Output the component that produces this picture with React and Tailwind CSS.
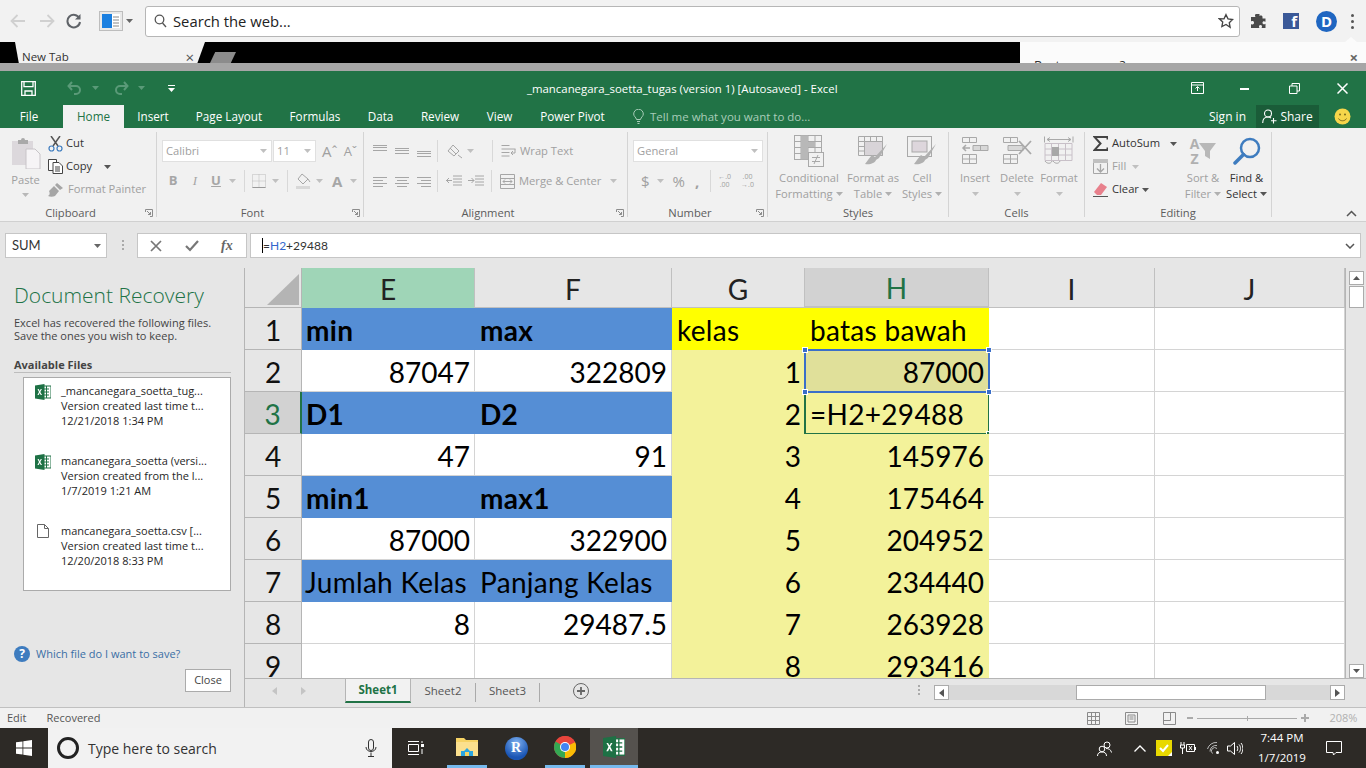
import React from "react";

const Caret = ({ c = "#a6a6a6", className = "" }) => (
  <svg width="7" height="4" viewBox="0 0 7 4" className={className}><path d="M0 0h7L3.500 4z" fill={c} /></svg>
);

const Lines = ({ rows, w = 16, h = 13, c = "#a6a6a6" }) => (
  <svg width={w} height={h} viewBox={`0 0 ${w} ${h}`} fill="none" stroke={c}>
    {rows.map(([a, b, y], i) => <path key={i} d={`M${a} ${y + 0.5}H${b}`} />)}
  </svg>
);

const XL = ({ s = 16, bg = "#1e7145", sheet = "#fff" }) => (
  <svg width={s} height={s} viewBox="0 0 16 16">
    <rect x="6" y="2" width="10" height="12" fill={sheet} stroke={bg} />
    <path d="M9 5h5M9 8h5M9 11h5M11.500 2v12" stroke={bg} />
    <path d="M0 1.500 9.500 0v16L0 14.500z" fill={bg} />
    <path d="M2.500 5 4 7.900 2.400 11h1.300l1-2 1 2H7L5.300 7.900 6.900 5H5.700l-1 1.900-1-1.900z" fill="#fff" />
  </svg>
);

function Group({ w, label, launcher, children, last }) {
  return (
    <div className={`relative h-[85px] shrink-0 ${last ? "" : "border-r border-[#d4d4d4]"} ${w}`}>
      <div className="flex h-[73px]">{children}</div>
      <div className={`h-[16px] text-center text-[11.200px] leading-[16px] text-[#5c5c5c] ${launcher ? "pr-[15px]" : ""}`}>{label}</div>
      {launcher && (
        <svg width="8" height="8" viewBox="0 0 8 8" fill="none" stroke="#8c8c8c" className="absolute right-[3px] top-[77px]">
          <path d="M.5 3V.5H7.500V7.500H5M2 2l3.500 3.500M5.500 3v2.500H3" />
        </svg>
      )}
    </div>
  );
}

const Big = ({ w, icon, l1, l2, caret, dark }) => (
  <div className={`flex flex-col items-center shrink-0 ${w}`}>
    <div className="flex h-[38px] items-center justify-center">{icon}</div>
    <div className={`h-[16px] whitespace-nowrap text-[11.200px] leading-[16px] ${dark ? "text-[#333]" : "text-[#a0a0a0]"}`}>{l1}</div>
    <div className={`flex h-[16px] items-center gap-[3px] whitespace-nowrap text-[11.200px] leading-[16px] ${dark ? "text-[#333]" : "text-[#a0a0a0]"}`}>
      {l2}{caret && <Caret c={dark ? "#555" : "#b0b0b0"} />}
    </div>
  </div>
);

const GridIcon = ({ kind }) => {
  const c = "#a9a9a9";
  if (kind === "cond") return (
    <svg width="30" height="32" viewBox="0 0 30 32" fill="none" stroke={c}>
      <rect x=".5" y=".5" width="27" height="24" /><path d="M7 .5v24M14 .5v24M21 .5v24M.5 6.500h27M.5 12.500h27M.5 18.500h27" />
      <path d="M7 .5h7v24H7zM14 7h7v5h-7z" fill="#b8b8b8" stroke="none" />
      <rect x="14.500" y="17.500" width="15" height="14" fill="#f1f1f1" /><path d="M18 22.500h8M18 26.500h8M20 29l4-9" />
    </svg>
  );
  if (kind === "table") return (
    <svg width="30" height="30" viewBox="0 0 30 30" fill="none" stroke={c}>
      <path d="M.5.500h24v19H.5zM.5 5.500h24M.5 10.500h24M.5 15h24M6.500.5v19M12.500.5v19M18.500.5v19" />
      <path d="M6.500 5.500h18v14h-18z" fill="#d8d4d8" />
      <path d="M29 8 17 21l-3-2c-2 2-4 5-7 9 5 1 10-1 11-4l3-2z" fill="#b0b0b0" stroke="none" />
    </svg>
  );
  if (kind === "cell") return (
    <svg width="30" height="30" viewBox="0 0 30 30" fill="none" stroke={c}>
      <rect x=".5" y=".5" width="24" height="20" /><rect x="5" y="5" width="15" height="11" fill="#ddd6dc" />
      <path d="M29 8 17 21l-3-2c-2 2-4 5-7 9 5 1 10-1 11-4l3-2z" fill="#b0b0b0" stroke="none" />
    </svg>
  );
  if (kind === "ins") return (
    <svg width="28" height="28" viewBox="0 0 28 28" fill="none" stroke={c}>
      <path d="M1.500.5h14v5h-14zM8.500.5v5M1.500 17.500h14v9h-14zM1.500 22h14M8.500 17.500v9" />
      <path d="M12 8.500h15v5H12zM19.500 8.500v5" fill="#d8d8d8" /><path d="M9 11H2M5 8l-3 3 3 3" strokeWidth="1.500" />
    </svg>
  );
  if (kind === "del") return (
    <svg width="30" height="28" viewBox="0 0 30 28" fill="none" stroke={c}>
      <path d="M1.500.5h14v5h-14zM8.500.5v5M1.500 17.500h14v9h-14zM1.500 22h14M8.500 17.500v9" />
      <path d="M6 8.500h15v5H6z" fill="#d8d8d8" /><path d="m17 4 12 13M29 4 17 17" strokeWidth="1.800" />
    </svg>
  );
  return (
    <svg width="30" height="30" viewBox="0 0 30 30" fill="none" stroke={c}>
      <path d="M.5.500v6M29 .5v6M3 3.500h24M3 3.500l3-2M3 3.500l3 2M27 3.500l-3-2M27 3.500l-3 2" />
      <path d="M1 7.500h27v17H1zM7.500 7.500v17M14.500 7.500v17M21.500 7.500v17M1 13h27M1 19h27" stroke="#c8c0c8" />
      <rect x="8" y="11" width="7" height="9" fill="#a8a8a8" stroke="none" />
      <path d="M1 25c2 3 6 3 7 0M9 25c2 3 6 3 7 0" />
    </svg>
  );
};

function Chrome() {
  return (
    <div className="h-[71px] shrink-0">
      <div className="relative flex h-[42px] items-center bg-[#f2f2f2]">
        <svg width="16" height="14" viewBox="0 0 16 14" fill="none" stroke="#d0d0d0" strokeWidth="1.800" className="ml-[10px]"><path d="M15 7H2M7.500 1 1.500 7l6 6" /></svg>
        <svg width="16" height="14" viewBox="0 0 16 14" fill="none" stroke="#d0d0d0" strokeWidth="1.800" className="ml-[13px]"><path d="M1 7h13M8.500 1l6 6-6 6" /></svg>
        <svg width="16" height="16" viewBox="0 0 16 16" fill="none" stroke="#5f6368" strokeWidth="2" className="ml-[11px]"><path d="M13.500 5.500A6.300 6.300 0 1 0 14 9" /><path d="M14.500 1v5.500H9" fill="#5f6368" stroke="none" /></svg>
        <svg width="24" height="20" viewBox="0 0 24 20" className="ml-[17px]"><rect x=".5" y=".5" width="23" height="19" fill="#e9e9e9" stroke="#bdbdbd" /><rect x="3" y="3" width="10" height="14" fill="#1a7fe0" /><rect x="13" y="3" width="8" height="14" fill="#fff" /><path d="M14 6h6M14 9h6M14 12h6M14 15h6" stroke="#888" /></svg>
        <Caret c="#666" className="ml-[3px]" />
        <div className="ml-[12px] flex h-[31px] w-[1095px] items-center rounded-[3px] border border-[#b6b6b6] bg-white pl-[8px] pr-[5px]">
          <svg width="13" height="14" viewBox="0 0 13 14" fill="none" stroke="#555" strokeWidth="1.300"><circle cx="5.500" cy="5.500" r="4.300" /><path d="m8.500 9 3.500 4" /></svg>
          <span className="ml-[6px] text-[14.800px] text-[#222]">Search the web...</span>
          <svg width="16" height="16" viewBox="0 0 24 24" fill="none" stroke="#444" strokeWidth="2" className="ml-auto"><path d="m12 2.500 3 6.300 6.900.9-5 4.800 1.300 6.900L12 17.200l-6.200 3.200 1.300-6.900-5-4.800L9 8.800z" /></svg>
        </div>
        <svg width="16" height="16" viewBox="0 0 16 16" className="ml-[10px]" fill="#4a4a4a"><path d="M6 1h3.500v2.300c0-1 3-1 3 .7v1.500h3v3.300c-1.500-1-3-.5-3 1s1.500 2 3 1V15h-4c1-1.500.5-3-1-3s-2 1.500-1 3H1v-4c1.500 1 3 .5 3-1.200S2.500 7.500 1 8.500V4h4.500C4.500 3 5 1 6 1z" /></svg>
        <div className="ml-[17px] flex h-[16px] w-[16px] items-end justify-end bg-[#3b5998] pr-[2px] text-[15px] font-bold leading-[15px] text-white">f</div>
        <div className="ml-[17px] flex h-[21px] w-[21px] items-center justify-center rounded-full bg-[#1f66c1] text-[15px] font-bold leading-none text-white">D</div>
        <div className="ml-[14px] flex flex-col gap-[3px]">
          <span className="h-[3px] w-[3px] rounded-full bg-[#555]" /><span className="h-[3px] w-[3px] rounded-full bg-[#555]" /><span className="h-[3px] w-[3px] rounded-full bg-[#555]" />
        </div>
        <span className="absolute bottom-0 left-[1345px] h-[5px] w-[12px] bg-[#fbfbfb] [clip-path:polygon(50%_0,100%_100%,0_100%)]" />
      </div>
      <div className="flex h-[21px] overflow-hidden bg-black">
        <div className="ml-[15px] flex h-[21px] w-[190px] items-start bg-[#f2f2f2] pl-[7px] pr-[11px] pt-[7px] [clip-path:polygon(0_0,100%_0,96%_100%,2%_100%)]">
          <span className="text-[11.500px] leading-[16px] text-[#333]">New Tab</span>
          <span className="ml-auto text-[15px] leading-[16px] text-[#555]">×</span>
        </div>
        <div className="ml-[5px] mt-[10px] h-[11px] w-[26px] bg-[#8c8c8c] [clip-path:polygon(20%_0,100%_0,80%_100%,0_100%)]" />
        <div className="relative ml-auto h-[21px] w-[346px] overflow-hidden bg-[#fbfbfb] pl-[14px] pt-[15px] text-[13px] leading-[16px] text-[#333]">
          Restore pages?
          <span className="absolute right-[8px] top-[7px] text-[15px] font-bold leading-[16px] text-[#666]">×</span>
        </div>
      </div>
      <div className="h-[8px] bg-[#a6a6a6]" />
    </div>
  );
}

const Tab = ({ w, t, active }) => (
  <div className={`flex h-[23px] shrink-0 items-center justify-center text-[11.700px] ${w} ${active ? "bg-[#f1f1f1] text-[#217346]" : "text-white"}`}>{t}</div>
);

function TitleBar() {
  return (
    <div className="h-[57px] shrink-0 bg-[#217346] text-white">
      <div className="relative flex h-[34px] items-center">
        <svg width="15" height="15" viewBox="0 0 15 15" fill="none" stroke="#fff" strokeWidth="1.300" className="ml-[21px]"><path d="M.7.7h13.600v13.600H.7zM3 .7v5h9v-5M4 14.300V10h7v4.300" /></svg>
        <svg width="16" height="14" viewBox="0 0 16 14" fill="none" stroke="#5a9a78" strokeWidth="2" className="ml-[31px]"><path d="M5 1 1.500 5 5 9M2 5h7a4 4 0 0 1 0 8H7" /></svg>
        <Caret c="#5a9a78" className="ml-[9px]" />
        <svg width="16" height="14" viewBox="0 0 16 14" fill="none" stroke="#5a9a78" strokeWidth="2" className="ml-[14px]"><path d="M11 1l3.500 4L11 9M14 5H7a4 4 0 0 0 0 8h2" /></svg>
        <Caret c="#5a9a78" className="ml-[9px]" />
        <svg width="7" height="7" viewBox="0 0 7 7" fill="#fff" className="ml-[23px]"><path d="M0 0h7v1H0zM0 3h7L3.500 7z" /></svg>
        <span className="ml-[352px] translate-y-[1px] whitespace-nowrap text-[11.400px]">_mancanegara_soetta_tugas (version 1) [Autosaved] - Excel</span>
        <svg width="13" height="12" viewBox="0 0 13 12" fill="none" stroke="#fff" className="ml-[353px]"><path d="M.5.500h12v11H.5zM.5 3h12M6.500 9V5M4.500 6.500l2-2 2 2" /></svg>
        <span className="ml-[36px] h-[2px] w-[9px] translate-y-[1px] bg-white" />
        <svg width="11" height="11" viewBox="0 0 11 11" fill="none" stroke="#fff" className="ml-[40px]"><path d="M.5 3h7.500v7.500H.5zM3 3V.5h7.500V8H8" /></svg>
        <svg width="11" height="11" viewBox="0 0 11 11" fill="none" stroke="#fff" strokeWidth="1.500" className="ml-[37px]"><path d="m.5.500 10 10M10.500.5l-10 10" /></svg>
      </div>
      <div className="flex h-[23px] items-center">
        <Tab w="w-[58px]" t="File" /><div className="w-[5px]" />
        <Tab w="w-[61px]" t="Home" active />
        <Tab w="w-[58px]" t="Insert" /><Tab w="w-[94px]" t="Page Layout" /><Tab w="w-[78px]" t="Formulas" />
        <Tab w="w-[53px]" t="Data" /><Tab w="w-[66px]" t="Review" /><Tab w="w-[53px]" t="View" /><Tab w="w-[93px]" t="Power Pivot" />
        <svg width="11" height="15" viewBox="0 0 11 15" fill="none" stroke="#a9cdb9" className="ml-[14px]"><path d="M3.500 10.500C3 8 .7 7.500.7 5a4.800 4.800 0 0 1 9.600 0c0 2.500-2.300 3-2.800 5.500zM4 12.500h3M4.500 14.500h2" /></svg>
        <span className="ml-[6px] whitespace-nowrap text-[11.500px] text-[#a9cdb9]">Tell me what you want to do...</span>
        <span className="ml-auto text-[12px]">Sign in</span>
        <div className="ml-[10px] flex h-[23px] w-[63px] items-center justify-center gap-[3px] bg-[#1a5c38] text-[12px]">
          <svg width="15" height="15" viewBox="0 0 15 15" fill="none" stroke="#fff" strokeWidth="1.100"><circle cx="6" cy="4.500" r="3.500" /><path d="M.7 14c0-4 2.500-6 5.300-6 1 0 2 .3 3 1M11.500 9v5.500M9 11.700h5.500" /></svg>
          Share
        </div>
        <svg width="17" height="17" viewBox="0 0 17 17" className="ml-[15px] mr-[15px]"><circle cx="8.500" cy="8.500" r="8" fill="#f6d64a" /><circle cx="6" cy="6.500" r="1" fill="#7a6a1e" /><circle cx="11" cy="6.500" r="1" fill="#7a6a1e" /><path d="M4.500 10.500c1.500 3 6.500 3 8 0" fill="none" stroke="#7a6a1e" /></svg>
      </div>
    </div>
  );
}

const Combo = ({ w, t }) => (
  <div className={`flex h-[22px] shrink-0 items-center justify-between border border-[#e0e0e0] bg-white pl-[3px] pr-[4px] text-[11.200px] text-[#a0a0a0] ${w}`}>
    {t}<Caret c="#c0c0c0" />
  </div>
);

const Sep = ({ h = "h-[22px]", ml = "ml-0" }) => <div className={`w-px shrink-0 bg-[#d8d8d8] ${h} ${ml}`} />;

function Ribbon() {
  const G = "#a6a6a6";
  return (
    <div className="flex h-[94px] shrink-0 border-b border-[#d0d0d0] bg-[#f1f1f1] pt-[4px] text-[11.200px]">
      <Group w="w-[157px]" label="Clipboard" launcher>
        <div className="flex w-[48px] shrink-0 flex-col items-center">
          <svg width="29" height="32" viewBox="0 0 29 32" className="ml-[4px] mt-[5px]"><path d="M0 4h21v24H0z" fill="#dcd8dc" /><path d="M6 3h3a2 2 0 0 1 4 0h3v4H6z" fill="#a9a9a9" /><path d="M14 12h9l5 5v15H14z" fill="#f6f4f6" stroke="#c8c4c8" /></svg>
          <span className="ml-[3px] mt-[3px] leading-[16px] text-[#a0a0a0]">Paste</span>
          <Caret c="#b8b8b8" className="ml-[3px] mt-[5px]" />
        </div>
        <div className="flex flex-col">
          <div className="flex h-[23px] items-center gap-[3px] text-[#333]">
            <svg width="15" height="16" viewBox="0 0 15 16" fill="none"><path d="m3 0 7 10M12 0 5 10" stroke="#555" strokeWidth="1.500" /><circle cx="3.500" cy="12.500" r="2.500" stroke="#3e7cbf" strokeWidth="1.200" /><circle cx="11.500" cy="12.500" r="2.500" stroke="#3e7cbf" strokeWidth="1.200" /></svg>
            Cut
          </div>
          <div className="flex h-[23px] items-center gap-[3px] text-[#333]">
            <svg width="15" height="15" viewBox="0 0 15 15" fill="none" stroke="#444"><path d="M.5.500h8v11H.5z" fill="#fff" /><path d="M5 3.500h6l3.500 3.500v7.500H5z" fill="#fff" /><path d="M7 8h5M7 10h5M7 12h5" /></svg>
            Copy<Caret c="#555" className="ml-[9px]" />
          </div>
          <div className="flex h-[23px] items-center gap-[5px] whitespace-nowrap text-[#a0a0a0]">
            <svg width="15" height="14" viewBox="0 0 15 14" fill={G}><path d="M9 0l6 5-3 2-5-5zM6 3l5 5-4 5c-2 1-5 1-7 0 2-1 2-3 1-5z" /></svg>
            Format Painter
          </div>
        </div>
      </Group>
      <Group w="w-[207px]" label="Font" launcher>
        <div className="flex flex-col pl-[5px]">
          <div className="mt-[8px] flex items-center">
            <Combo w="w-[110px]" t="Calibri" />
            <div className="w-px" />
            <Combo w="w-[43px]" t="11" />
            <span className="ml-[6px] text-[15px] leading-none text-[#a0a0a0]">Aˆ</span>
            <span className="ml-[6px] text-[13px] leading-none text-[#a0a0a0]">Aˇ</span>
          </div>
          <div className="mt-[8px] flex h-[22px] items-center text-[#a6a6a6]">
            <span className="w-[22px] text-center text-[13px] font-bold">B</span>
            <span className="w-[22px] text-center font-['Liberation_Serif',serif] text-[13px] italic">I</span>
            <span className="w-[20px] text-center text-[13px] font-bold underline">U</span>
            <Caret c="#c0c0c0" className="ml-[3px]" />
            <Sep ml="ml-[8px]" />
            <svg width="14" height="14" viewBox="0 0 14 14" fill="none" stroke="#bbb" strokeDasharray="1 1" className="ml-[7px]"><path d="M.5.500h13v13H.5zM7 .5v13M.5 7h13" /><path d="M.5 13.500h13" stroke="#999" strokeDasharray="none" /></svg>
            <Caret c="#c0c0c0" className="ml-[6px]" />
            <Sep ml="ml-[8px]" />
            <svg width="17" height="16" viewBox="0 0 17 16" fill="none" stroke={G} className="ml-[7px]"><path d="m7 1 6 5-5 5-5-5zM13 6l2 3" /><rect x="1" y="13" width="14" height="3" fill="#d8d8d8" stroke="none" /></svg>
            <Caret c="#c0c0c0" className="ml-[4px]" />
            <span className="ml-[9px] text-[15px] font-bold leading-none">A</span>
            <Caret c="#c0c0c0" className="ml-[8px]" />
          </div>
        </div>
      </Group>
      <Group w="w-[264px]" label="Alignment" launcher>
        <div className="flex flex-col pl-[8px]">
          <div className="mt-[8px] flex h-[22px] items-center">
            <Lines rows={[[1, 15, 0], [1, 15, 2], [1, 15, 5]]} h={13} />
            <div className="w-[6px]" />
            <Lines rows={[[1, 15, 3], [1, 15, 5], [1, 15, 8]]} />
            <div className="w-[6px]" />
            <Lines rows={[[1, 15, 6], [1, 15, 8], [1, 15, 11]]} />
            <Sep ml="ml-[5px]" />
            <svg width="18" height="16" viewBox="0 0 18 16" fill="none" stroke={G} className="ml-[8px]"><path d="m2 8 5-6 6 6-5 5zM12 12l4 3" /><path d="M4 5l6 6" /></svg>
            <Caret c="#c0c0c0" className="ml-[3px]" />
            <Sep ml="ml-[18px]" />
            <svg width="15" height="15" viewBox="0 0 15 15" fill="none" stroke={G} className="ml-[8px]"><path d="M.5 1.500h8M.5 5h14M.5 8.500h8M.5 12h8M14 5v4h-4m2-2-2 2 2 2" /></svg>
            <span className="ml-[4px] text-[#a0a0a0]">Wrap Text</span>
          </div>
          <div className="mt-[8px] flex h-[22px] items-center">
            <Lines rows={[[1, 15, 2], [1, 11, 5], [1, 15, 8], [1, 11, 11]]} />
            <div className="w-[6px]" />
            <Lines rows={[[1, 15, 2], [3, 13, 5], [1, 15, 8], [3, 13, 11]]} />
            <div className="w-[6px]" />
            <Lines rows={[[1, 15, 2], [5, 15, 5], [1, 15, 8], [5, 15, 11]]} />
            <Sep ml="ml-[5px]" />
            <svg width="16" height="13" viewBox="0 0 16 13" fill="none" stroke={G} className="ml-[8px]"><path d="M7 1h9M7 4h9M7 7h9M7 10h9M6 5.500H0M3 3 .5 5.500 3 8" /></svg>
            <svg width="16" height="13" viewBox="0 0 16 13" fill="none" stroke={G} className="ml-[6px]"><path d="M7 1h9M7 4h9M7 7h9M7 10h9M0 5.500h6M3.500 3 6 5.500 3.500 8" /></svg>
            <Sep ml="ml-[7px]" />
            <svg width="15" height="15" viewBox="0 0 15 15" fill="none" stroke={G} className="ml-[8px]"><path d="M.5.500h14v14H.5zM.5 4.500h14M.5 10.500h14M3 7.500h9M5 5.500l-2 2 2 2M10 5.500l2 2-2 2" /></svg>
            <span className="ml-[4px] whitespace-nowrap text-[#a0a0a0]">Merge &amp; Center</span>
            <Caret c="#c0c0c0" className="ml-[9px]" />
          </div>
        </div>
      </Group>
      <Group w="w-[140px]" label="Number" launcher>
        <div className="flex flex-col pl-[5px]">
          <div className="mt-[8px]"><Combo w="w-[130px]" t="General" /></div>
          <div className="mt-[8px] flex h-[22px] items-center pl-[8px] text-[#a0a0a0]">
            <span className="text-[15px]">$</span>
            <Caret c="#c0c0c0" className="ml-[7px]" />
            <span className="ml-[9px] text-[15px]">%</span>
            <span className="ml-[10px] text-[15px] font-bold">,</span>
            <Sep ml="ml-[11px]" />
            <span className="ml-[7px] text-center text-[7px] leading-[8px]">←.0<br />.00</span>
            <span className="ml-[10px] text-center text-[7px] leading-[8px]">.00<br />→.0</span>
          </div>
        </div>
      </Group>
      <Group w="w-[181px]" label="Styles">
        <Big w="w-[82px]" icon={<GridIcon kind="cond" />} l1="Conditional" l2="Formatting" caret />
        <Big w="w-[46px]" icon={<GridIcon kind="table" />} l1="Format as" l2="Table" caret />
        <Big w="w-[52px]" icon={<GridIcon kind="cell" />} l1="Cell" l2="Styles" caret />
      </Group>
      <Group w="w-[136px]" label="Cells">
        <div className="w-[5px]" />
        <Big w="w-[42px]" icon={<GridIcon kind="ins" />} l1="Insert" l2={<Caret c="#c0c0c0" />} />
        <Big w="w-[42px]" icon={<GridIcon kind="del" />} l1="Delete" l2={<Caret c="#c0c0c0" />} />
        <Big w="w-[42px]" icon={<GridIcon kind="fmt" />} l1="Format" l2={<Caret c="#c0c0c0" />} />
      </Group>
      <Group w="w-[187px]" label="Editing">
        <div className="flex w-[95px] shrink-0 flex-col pl-[8px]">
          <div className="flex h-[23px] items-center gap-[4px] text-[#333]">
            <svg width="15" height="15" viewBox="0 0 15 15" fill="none" stroke="#444" strokeWidth="2"><path d="M14.500 3.500V1H1.500l6 6.500-6 6.500h13v-2.500" /></svg>
            AutoSum<Caret c="#555" className="ml-[6px]" />
          </div>
          <div className="flex h-[23px] items-center gap-[4px] text-[#a0a0a0]">
            <svg width="15" height="15" viewBox="0 0 15 15" fill="none" stroke={G}><path d="M.5.500h14v14H.5z" /><path d="M0 0h15v4H0z" fill="#c0c0c0" stroke="none" /><path d="M7.500 5v8M4 9.500l3.500 3.500L11 9.500" strokeWidth="1.300" /></svg>
            Fill<Caret c="#c0c0c0" className="ml-[2px]" />
          </div>
          <div className="flex h-[23px] items-center gap-[4px] text-[#333]">
            <svg width="15" height="14" viewBox="0 0 15 14"><path d="M8 0l6 4-6 8H4L1 9z" fill="#e8808c" /><path d="M0 13.500h15" stroke="#555" /></svg>
            Clear<Caret c="#555" className="ml-[-1px]" />
          </div>
        </div>
        <Big w="w-[46px]" icon={<span className="flex items-center"><span className="text-center text-[14px] font-bold leading-[15px] text-[#b0b0b0]">A<br />Z</span><svg width="17" height="18" viewBox="0 0 17 18" fill="#b8b8b8"><path d="M0 1h17l-6 8v8l-5-3V9z" /></svg></span>} l1="Sort &" l2="Filter" caret />
        <Big w="w-[41px]" dark icon={<svg width="28" height="28" viewBox="0 0 28 28" fill="none" stroke="#3e7cbf"><circle cx="17" cy="11" r="9" strokeWidth="2.500" /><path d="M10.500 17.500 2 26" strokeWidth="3.500" strokeLinecap="round" /></svg>} l1="Find &" l2="Select" caret />
      </Group>
      <svg width="11" height="7" viewBox="0 0 11 7" fill="none" stroke="#555" strokeWidth="1.500" className="ml-[74px] mt-[78px]"><path d="m1 6 4.500-4.500L10 6" /></svg>
    </div>
  );
}

function FormulaBar() {
  return (
    <div className="flex h-[46px] shrink-0 items-start bg-[#e6e6e6] pl-[5px] pr-[5px] pt-[11px] font-['Lato',sans-serif]">
      <div className="flex h-[25px] w-[102px] shrink-0 items-center justify-between border border-[#c6c6c6] bg-white pl-[6px] pr-[5px] text-[13px] text-[#333]">
        SUM<Caret c="#666" />
      </div>
      <div className="ml-[15px] mt-[7px] flex flex-col gap-[2px]"><span className="h-[2px] w-[2px] bg-[#aaa]" /><span className="h-[2px] w-[2px] bg-[#aaa]" /><span className="h-[2px] w-[2px] bg-[#aaa]" /></div>
      <div className="ml-[13px] flex h-[25px] w-[110px] shrink-0 items-center border border-[#c6c6c6] bg-white pl-[12px]">
        <svg width="12" height="12" viewBox="0 0 12 12" fill="none" stroke="#777" strokeWidth="1.700"><path d="m1 1 10 10M11 1 1 11" /></svg>
        <svg width="14" height="12" viewBox="0 0 14 12" fill="none" stroke="#777" strokeWidth="2.200" className="ml-[23px]"><path d="m1 6 4 4 8-9" /></svg>
        <span className="ml-[22px] font-['Liberation_Serif',serif] text-[14px] font-bold italic leading-none text-[#666]">fx</span>
      </div>
      <div className="ml-[3px] flex h-[25px] flex-1 items-center border border-[#c6c6c6] bg-white pl-[11px] pr-[5px] text-[12px] text-[#333]">
        <span className="h-[15px] w-px bg-black" /><span>=</span><span className="text-[#3366cc]">H2</span><span>+29488</span>
        <svg width="10" height="6" viewBox="0 0 10 6" fill="none" stroke="#555" strokeWidth="1.500" className="ml-auto"><path d="m1 1 4 4 4-4" /></svg>
      </div>
    </div>
  );
}

const FileItem = ({ icon, a, b, c, mt = "" }) => (
  <div className={`flex h-[45px] ${mt}`}>
    <div className="w-[37px] shrink-0 pl-[11px] pt-[1px]">{icon}</div>
    <div className="whitespace-nowrap text-[11px] leading-[15px] text-[#262626]">{a}<br />{b}<br />{c}</div>
  </div>
);

function Recovery() {
  return (
    <div className="flex h-full w-[245px] shrink-0 flex-col border-r border-[#b5b5b5] bg-[#e6e6e6] pl-[14px] pr-[13px]">
      <div className="mt-[14px] whitespace-nowrap text-[21px] font-light leading-[26px] text-[#217346]">Document Recovery</div>
      <div className="mt-[8px] whitespace-nowrap text-[11px] leading-[13px] text-[#444]">Excel has recovered the following files.<br />Save the ones you wish to keep.</div>
      <div className="mt-[16px] h-[15px] border-b border-[#bdbdbd] text-[11px] font-bold leading-[14px] text-[#444]">Available Files</div>
      <div className="ml-[9px] mt-[4px] h-[214px] border border-[#ababab] bg-white pt-[5px]">
        <FileItem icon={<XL />} a="_mancanegara_soetta_tug..." b="Version created last time t..." c="12/21/2018 1:34 PM" />
        <FileItem mt="mt-[25px]" icon={<XL />} a="mancanegara_soetta (versi..." b="Version created from the l..." c="1/7/2019 1:21 AM" />
        <FileItem mt="mt-[25px]" icon={<svg width="12" height="14" viewBox="0 0 12 14" fill="#fff" stroke="#666" className="ml-[2px]"><path d="M.5.500h7l4 4v9H.5zM7.500.5v4h4" /></svg>} a="mancanegara_soetta.csv  [..." b="Version created last time t..." c="12/20/2018 8:33 PM" />
      </div>
      <div className="mt-[55px] flex h-[16px] items-center whitespace-nowrap text-[11px] text-[#3a6ea5]">
        <span className="mr-[6px] flex h-[16px] w-[16px] items-center justify-center rounded-full bg-[#3e7cbf] text-[12px] font-bold leading-none text-white">?</span>
        Which file do I want to save?
      </div>
      <div className="ml-auto mt-[7px] flex h-[23px] w-[46px] items-center justify-center border border-[#ababab] bg-white text-[11px] text-[#444]">Close</div>
    </div>
  );
}

const BLUE = "bg-[#558ed5]";
const YEL = "bg-[#ffff00]";
const PALE = "bg-[#f3f29a]";
const WHITE = "bg-white border-r border-b border-[#d4d4d4]";

const Cell = ({ t = "", bg = WHITE, bold, right, sel, pad = "pl-[5px] pr-[4px]", cls = "" }) => (
  <div className={`relative flex h-[42px] items-center overflow-visible whitespace-nowrap pt-[2px] ${pad} ${bg} ${bold ? "font-bold" : ""} ${right ? "justify-end" : "tracking-[0.3px]"} ${cls}`}>
    {t}
    {sel === "blue" && (
      <div className="absolute inset-[-1px] z-10 border-2 border-[#3a6fc9]">
        <span className="absolute left-[-4px] top-[-4px] h-[6px] w-[6px] border border-white bg-[#3a6fc9]" />
        <span className="absolute right-[-4px] top-[-4px] h-[6px] w-[6px] border border-white bg-[#3a6fc9]" />
        <span className="absolute bottom-[-4px] left-[-4px] h-[6px] w-[6px] border border-white bg-[#3a6fc9]" />
        <span className="absolute bottom-[-4px] right-[-4px] h-[6px] w-[6px] border border-white bg-[#3a6fc9]" />
      </div>
    )}
    {sel === "green" && (
      <div className="absolute inset-[-1px] border-2 border-[#217346]">
        <span className="absolute bottom-[-4px] right-[-4px] h-[6px] w-[6px] border border-white bg-[#217346]" />
      </div>
    )}
  </div>
);

const RowH = ({ n, sel }) => (
  <div className={`flex h-[42px] items-center justify-center border-b border-r border-[#b5b5b5] pt-[2px] ${sel ? "border-r-2 border-r-[#217346] bg-[#d2d2d2] text-[#217346]" : "bg-[#e6e6e6] text-[#111]"}`}>{n}</div>
);

const ColH = ({ t, cls = "bg-[#e6e6e6] text-[#222] border-b border-[#b5b5b5]" }) => (
  <div className={`flex h-[40px] items-center justify-center border-r border-[#c0c0c0] pt-[2px] ${cls}`}>{t}</div>
);

function Sheet() {
  const H5 = "pl-[5px] pr-[5px]";
  const E4 = "pl-[4px] pr-[4px]";
  const data = [
    [{ t: "min", bg: BLUE, bold: 1, pad: E4 }, { t: "max", bg: BLUE, bold: 1 }, { t: "kelas", bg: YEL }, { t: "batas bawah", bg: YEL, pad: H5 }],
    [{ t: "87047", right: 1, pad: E4 }, { t: "322809", right: 1 }, { t: "1", right: 1, bg: PALE }, { t: "87000", right: 1, bg: "bg-[#e0e09a]", sel: "blue", pad: H5 }],
    [{ t: "D1", bg: BLUE, bold: 1, pad: E4 }, { t: "D2", bg: BLUE, bold: 1 }, { t: "2", right: 1, bg: PALE }, { t: "=H2+29488", bg: PALE, sel: "green", pad: H5, cls: "tracking-[-0.6px]" }],
    [{ t: "47", right: 1, pad: E4 }, { t: "91", right: 1 }, { t: "3", right: 1, bg: PALE }, { t: "145976", right: 1, bg: PALE, pad: H5 }],
    [{ t: "min1", bg: BLUE, bold: 1, pad: E4 }, { t: "max1", bg: BLUE, bold: 1 }, { t: "4", right: 1, bg: PALE }, { t: "175464", right: 1, bg: PALE, pad: H5 }],
    [{ t: "87000", right: 1, pad: E4 }, { t: "322900", right: 1 }, { t: "5", right: 1, bg: PALE }, { t: "204952", right: 1, bg: PALE, pad: H5 }],
    [{ t: "Jumlah Kelas", bg: BLUE, pad: "pl-[3px] pr-[4px]" }, { t: "Panjang Kelas", bg: BLUE }, { t: "6", right: 1, bg: PALE }, { t: "234440", right: 1, bg: PALE, pad: H5 }],
    [{ t: "8", right: 1, pad: E4 }, { t: "29487.5", right: 1 }, { t: "7", right: 1, bg: PALE }, { t: "263928", right: 1, bg: PALE, pad: H5 }],
    [{}, {}, { t: "8", right: 1, bg: PALE }, { t: "293416", right: 1, bg: PALE, pad: H5 }],
  ];
  return (
    <div className="flex h-[410px] shrink-0">
      <div className="grid h-[410px] w-[1100px] shrink-0 grid-cols-[57px_173px_197px_133px_184px_166px_190px] content-start overflow-hidden bg-[#e6e6e6] font-['Lato',sans-serif] text-[28px] text-black">
        <div className="flex h-[40px] items-end justify-end border-b border-r border-[#b5b5b5] bg-[#e6e6e6] p-[2px]">
          <div className="h-[31px] w-[32px] bg-[#b4b4b4] [clip-path:polygon(100%_0,100%_100%,0_100%)]" />
        </div>
        <ColH t="E" cls="bg-[#9fd5b7] text-[#222]" />
        <ColH t="F" />
        <ColH t="G" />
        <ColH t="H" cls="bg-[#d2d2d2] text-[#217346] border-b-2 border-[#217346]" />
        <ColH t="I" />
        <ColH t="J" />
        {data.map((r, i) => (
          <React.Fragment key={i}>
            <RowH n={i + 1} sel={i === 2} />
            {r.map((c, j) => <Cell key={j} {...c} />)}
            <Cell /><Cell />
          </React.Fragment>
        ))}
      </div>
      <div className="flex h-[410px] w-[21px] shrink-0 flex-col items-center border-l border-[#b5b5b5] bg-[#e6e6e6] pt-[3px]">
        <div className="flex h-[14px] w-[15px] items-center justify-center border border-[#ababab] bg-white"><Caret c="#555" className="rotate-180" /></div>
        <div className="mt-[1px] h-[22px] w-[15px] border border-[#ababab] bg-white" />
        <div className="mt-auto flex h-[14px] w-[15px] items-center justify-center border border-[#ababab] bg-white"><Caret c="#555" /></div>
      </div>
    </div>
  );
}

const SmallArrow = ({ d, c = "#555" }) => (
  <div className="flex h-[15px] w-[15px] shrink-0 items-center justify-center border border-[#ababab] bg-white">
    <svg width="5" height="8" viewBox="0 0 5 8" fill={c}><path d={d === "l" ? "M5 0v8L0 4z" : "M0 0v8l5-4z"} /></svg>
  </div>
);

function SheetTabs() {
  return (
    <div className="flex h-[29px] shrink-0 items-start border-t border-[#b5b5b5] bg-[#e6e6e6] font-['Open_Sans',sans-serif]">
      <svg width="5" height="8" viewBox="0 0 5 8" fill="#c4c4c4" className="ml-[27px] mt-[8px]"><path d="M5 0v8L0 4z" /></svg>
      <svg width="5" height="8" viewBox="0 0 5 8" fill="#c4c4c4" className="ml-[24px] mt-[8px]"><path d="M0 0v8l5-4z" /></svg>
      <div className="ml-[39px] flex h-[24px] w-[66px] items-center justify-center border-x border-b-2 border-x-[#b5b5b5] border-b-[#217346] bg-[#f2f2f2] text-[11.500px] font-bold text-[#217346]">Sheet1</div>
      <div className="flex h-[24px] w-[64px] items-center justify-center text-[11.500px] text-[#555]">Sheet2</div>
      <div className="mt-[4px] h-[19px] w-px bg-[#aaa]" />
      <div className="flex h-[24px] w-[63px] items-center justify-center text-[11.500px] text-[#555]">Sheet3</div>
      <div className="mt-[4px] h-[19px] w-px bg-[#aaa]" />
      <svg width="16" height="16" viewBox="0 0 16 16" fill="none" stroke="#666" className="ml-[33px] mt-[4px]"><circle cx="8" cy="8" r="7.500" /><path d="M8 4v8M4 8h8" strokeWidth="1.800" /></svg>
      <div className="ml-[329px] mt-[6px] flex flex-col gap-[2px]"><span className="h-[2px] w-[2px] bg-[#aaa]" /><span className="h-[2px] w-[2px] bg-[#aaa]" /><span className="h-[2px] w-[2px] bg-[#aaa]" /></div>
      <div className="ml-[14px] mt-[6px] flex h-[15px] w-[411px] shrink-0 bg-[#d8d8d8]">
        <SmallArrow d="l" />
        <div className="ml-[127px] h-[15px] w-[190px] border border-[#ababab] bg-white" />
        <div className="ml-auto"><SmallArrow d="r" /></div>
      </div>
    </div>
  );
}

function StatusBar() {
  const c = "#8a8a8a";
  return (
    <div className="flex h-[21px] shrink-0 items-center border-t border-[#c0c0c0] bg-[#f1f1f1] pl-[7px] text-[11px] text-[#555]">
      <span>Edit</span><span className="ml-[20px]">Recovered</span>
      <svg width="13" height="13" viewBox="0 0 13 13" fill="none" stroke={c} className="ml-[987px]"><path d="M.5.500h12v12H.5zM4.500.5v12M8.500.5v12M.5 4.500h12M.5 8.500h12" /></svg>
      <svg width="13" height="13" viewBox="0 0 13 13" fill="none" stroke={c} className="ml-[25px]"><path d="M.5.500h12v12H.5zM3 3h7v7H3zM4.500 5h4M4.500 7h4" /></svg>
      <svg width="13" height="13" viewBox="0 0 13 13" fill="none" stroke={c} className="ml-[25px]"><path d="M.5.500h12v12H.5zM.5 8.500h7v-8" /></svg>
      <span className="ml-[11px] h-[2px] w-[6px] bg-[#aaa]" />
      <div className="relative ml-[4px] h-px w-[100px] bg-[#aaa]"><span className="absolute left-1/2 top-[-2px] h-[5px] w-px bg-[#aaa]" /></div>
      <svg width="8" height="8" viewBox="0 0 8 8" stroke="#aaa" strokeWidth="2" className="ml-[4px]"><path d="M4 0v8M0 4h8" /></svg>
      <span className="ml-[20px] text-[#b0b0b0]">208%</span>
    </div>
  );
}

function Taskbar() {
  return (
    <div className="flex h-[40px] shrink-0 items-center bg-[#2d2a26] text-white">
      <div className="flex h-[40px] w-[48px] items-center justify-center">
        <svg width="16" height="16" viewBox="0 0 16 16" fill="#fff"><path d="M0 2.300 6.500 1.400v6.200H0zM7.300 1.300 16 0v7.600H7.300zM0 8.400h6.500v6.200L0 13.700zM7.300 8.400H16V16l-8.700-1.200z" /></svg>
      </div>
      <div className="flex h-[40px] w-[344px] items-center bg-[#f2f2f2] pl-[9px] pr-[15px]">
        <span className="h-[22px] w-[22px] rounded-full border-[3px] border-[#222]" />
        <span className="ml-[9px] text-[14px] text-[#333]">Type here to search</span>
        <svg width="12" height="18" viewBox="0 0 12 18" fill="none" stroke="#333" className="ml-auto"><rect x="3.500" y=".5" width="5" height="11" rx="2.500" /><path d="M1 8c0 6 10 6 10 0M6 13.500V17M3 17.500h6" /></svg>
      </div>
      <svg width="16" height="14" viewBox="0 0 16 14" fill="none" stroke="#fff" className="ml-[16px]"><path d="M0 .5h11M0 13.500h11M.5 3.500h10v7H.5z" /><rect x="13" y="3" width="3" height="3" fill="#fff" stroke="none" /><path d="M14 0v2M14 8v5" /></svg>
      <div className="relative ml-[23px] flex h-[40px] w-[40px] items-center justify-center border-b-[3px] border-[#76b9ed]">
        <svg width="22" height="18" viewBox="0 0 22 18"><path d="M0 0h8l2 2h12v16H0z" fill="#f6d365" /><path d="M0 4h22v14H0z" fill="#fbe08e" /><path d="M5 18v-5h3l3-3 3 3h3v5z" fill="#2ba5e0" /><path d="M9 18v-4h4v4z" fill="#f6d365" /></svg>
      </div>
      <div className="ml-[9px] flex h-[40px] w-[40px] items-center justify-center">
        <div className="flex h-[23px] w-[23px] items-center justify-center rounded-full bg-[radial-gradient(circle_at_50%_25%,#7fb2f0,#1a55b4_70%)] font-['Liberation_Serif',serif] text-[14px] font-bold leading-none text-white">R</div>
      </div>
      <div className="ml-[9px] flex h-[40px] w-[40px] items-center justify-center border-b-[3px] border-[#76b9ed]">
        <svg width="22" height="22" viewBox="0 0 22 22"><circle cx="11" cy="11" r="11" fill="#e8453c" /><path d="M11 11 1.500 5.500A11 11 0 0 0 11 22z" fill="#34a853" /><path d="M11 11v11A11 11 0 0 0 21 6z" fill="#fbbc05" /><path d="M11 11 21 6A11 11 0 0 0 2 5z" fill="#e8453c" /><circle cx="11" cy="11" r="5" fill="#fff" /><circle cx="11" cy="11" r="4" fill="#4285f4" /></svg>
      </div>
      <div className="ml-[5px] flex h-[40px] w-[48px] items-center justify-center border-b-[3px] border-[#76b9ed] bg-[#55524e]">
        <XL s={22} bg="#1e7145" sheet="#fff" />
      </div>
      <svg width="15" height="15" viewBox="0 0 15 15" fill="none" stroke="#fff" className="ml-[459px]"><circle cx="10" cy="4" r="3" /><circle cx="5" cy="8" r="2.800" /><path d="M.5 15c0-3 2-4 4.500-4s4.500 1 4.500 4M9 7.500c2.500 0 5 1 5.500 4" /></svg>
      <svg width="12" height="7" viewBox="0 0 12 7" fill="none" stroke="#fff" strokeWidth="1.300" className="ml-[22px]"><path d="m.5 6.500 5.500-5.500 5.500 5.500" /></svg>
      <svg width="16" height="16" viewBox="0 0 16 16" className="ml-[10px]"><rect width="16" height="16" fill="#e8d800" /><path d="m4 8 3 3 5-6" fill="none" stroke="#fff" strokeWidth="2" /><path d="M12 16l4-4v4z" fill="#fff" /></svg>
      <svg width="16" height="12" viewBox="0 0 16 12" fill="none" stroke="#fff" className="ml-[8px]"><path d="M1 0v3M4 0v3M.5 3h4v3h-4zM2.500 6v6M6.500 2.500h8v7h-8zM9 4l3 4M12 4 9 8" /><path d="M15.500 5v3" /></svg>
      <svg width="13" height="13" viewBox="0 0 13 13" fill="none" stroke="#bbb" className="ml-[11px]"><path d="M.5 7A9 9 0 0 1 10 .5M3 9.500A6 6 0 0 1 10 3.500M5.500 11.500A3 3 0 0 1 10 6.500" /><circle cx="10.500" cy="10.500" r="1.500" fill="#fff" stroke="none" /></svg>
      <svg width="16" height="13" viewBox="0 0 16 13" fill="none" stroke="#fff" className="ml-[7px]"><path d="M.5 4h3l4-3.500v12l-4-3.500h-3zM10 4c1 1 1 4 0 5M12 2.500c2 2 2 6 0 8M14 1c2.500 3 2.500 8 0 11" /></svg>
      <div className="ml-[11px] w-[56px] whitespace-nowrap text-center text-[11.500px] leading-[20px]">7:44 PM<br />1/7/2019</div>
      <svg width="16" height="15" viewBox="0 0 16 15" fill="none" stroke="#fff" className="ml-[16px]"><path d="M.5.500h15v11H10L7.500 14 7 11.500H.5z" /></svg>
    </div>
  );
}

export default function App() {
  return (
    <div className="flex h-[768px] w-[1366px] flex-col overflow-hidden bg-[#e6e6e6] font-['Open_Sans',sans-serif]">
      <Chrome />
      <TitleBar />
      <Ribbon />
      <FormulaBar />
      <div className="flex h-[439px] shrink-0">
        <Recovery />
        <div className="flex w-[1121px] flex-col">
          <Sheet />
          <SheetTabs />
        </div>
      </div>
      <StatusBar />
      <Taskbar />
    </div>
  );
}
